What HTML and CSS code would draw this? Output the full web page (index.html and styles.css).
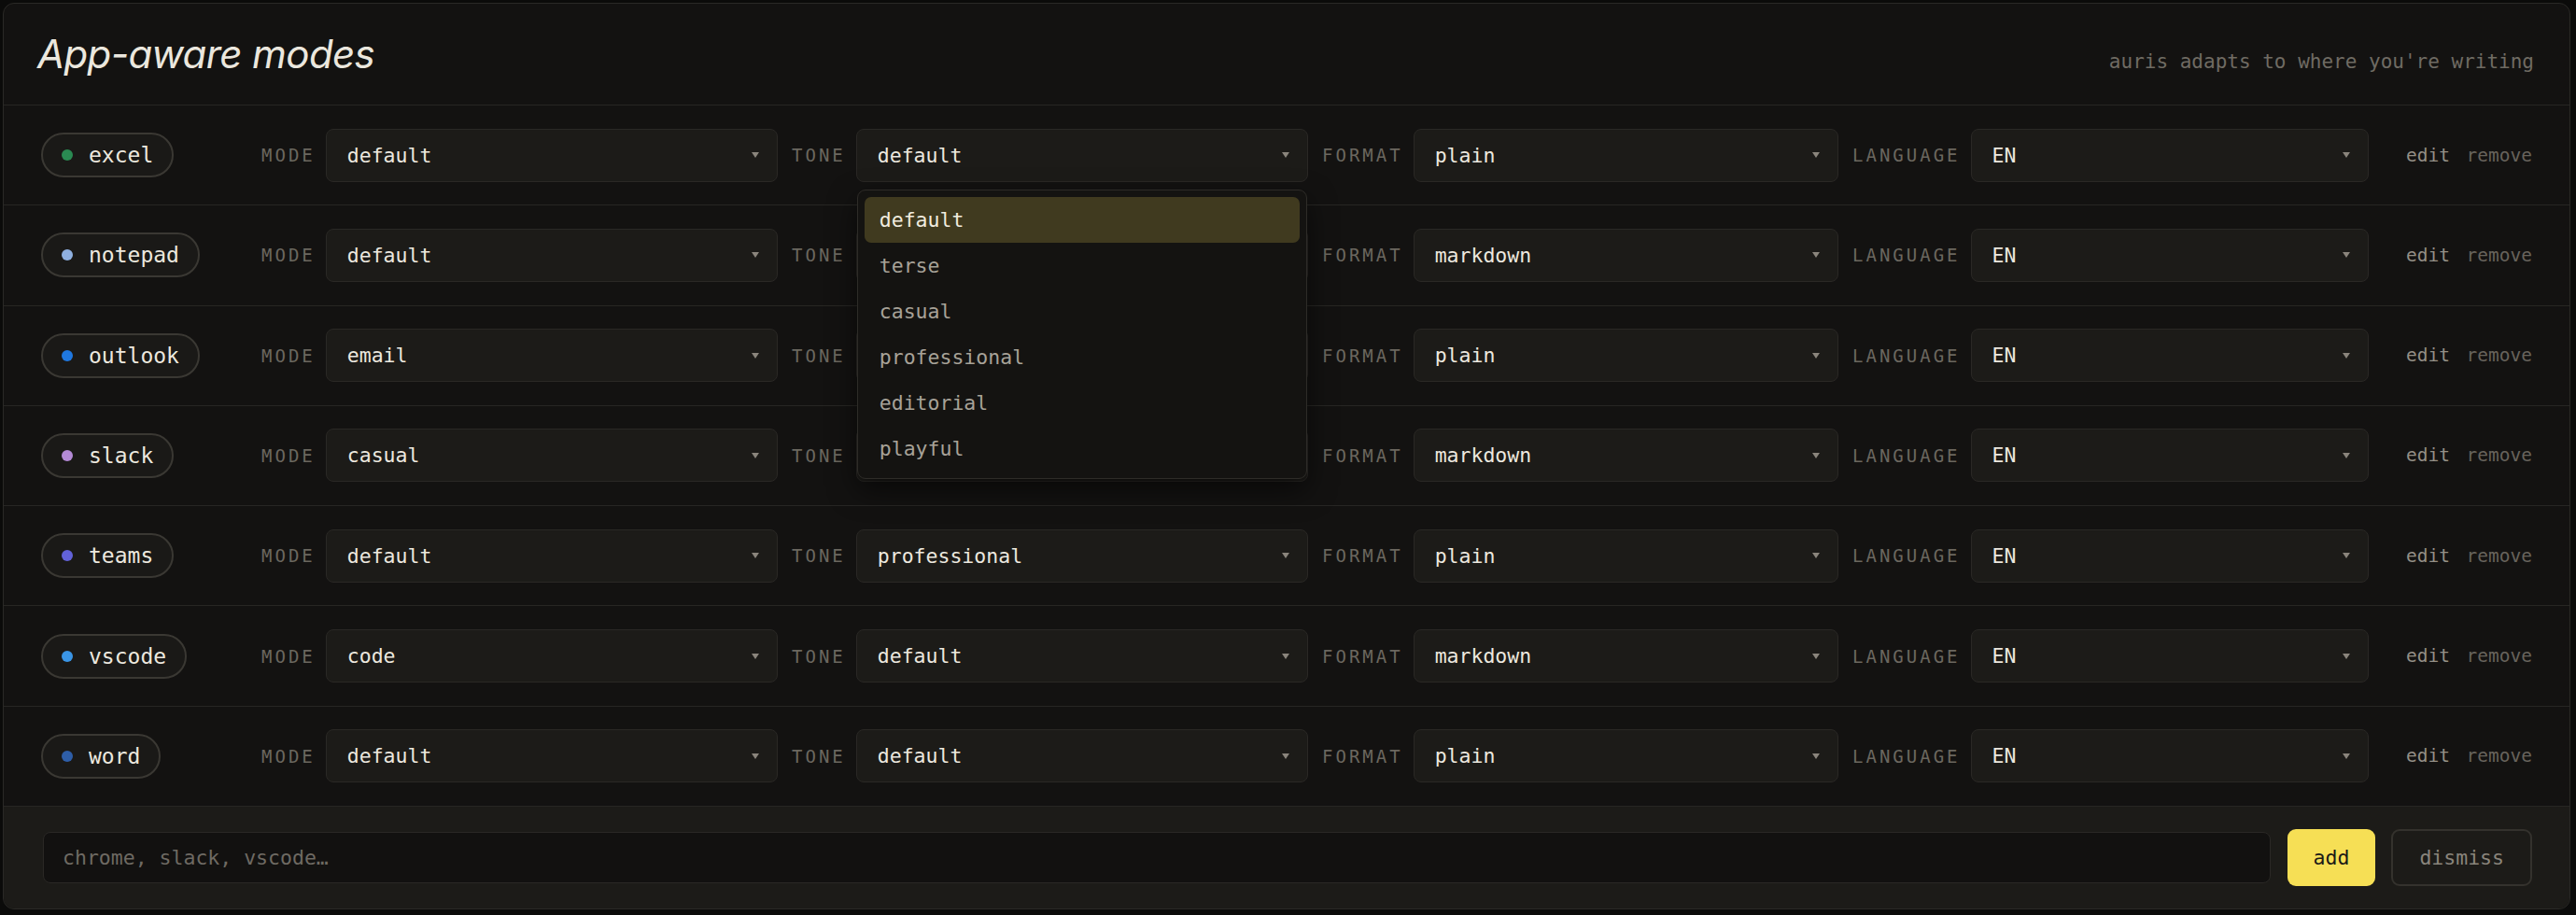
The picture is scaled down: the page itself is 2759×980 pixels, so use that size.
FILE: index.html
```
<!DOCTYPE html>
<html>
<head>
	<meta charset="utf-8">
	<meta name="viewport" content="width=device-width, initial-scale=1">
	<title>App-aware modes</title>
	<link rel="stylesheet" href="styles.css">
</head>
<body>

<div class="card">
	<header class="head">
		<h1>App-aware modes</h1>
		<span class="hint">auris adapts to where you're writing</span>
	</header>

	<div class="row">
		<div class="app"><span class="pill"><i class="dot excel"></i>excel</span></div>
		<div class="fields">
			<div class="field"><span class="label">MODE</span><div class="select">default<b></b></div></div>
			<div class="field"><span class="label">TONE</span>
				<div class="select open">default<b></b>
					<ul class="menu">
						<li class="active">default</li>
						<li>terse</li>
						<li>casual</li>
						<li>professional</li>
						<li>editorial</li>
						<li>playful</li>
					</ul>
				</div>
			</div>
			<div class="field"><span class="label">FORMAT</span><div class="select">plain<b></b></div></div>
			<div class="field"><span class="label">LANGUAGE</span><div class="select">EN<b></b></div></div>
		</div>
		<div class="actions"><button class="edit">edit</button><button class="remove">remove</button></div>
	</div>

	<div class="row">
		<div class="app"><span class="pill"><i class="dot notepad"></i>notepad</span></div>
		<div class="fields">
			<div class="field"><span class="label">MODE</span><div class="select">default<b></b></div></div>
			<div class="field"><span class="label">TONE</span><div class="select">default<b></b></div></div>
			<div class="field"><span class="label">FORMAT</span><div class="select">markdown<b></b></div></div>
			<div class="field"><span class="label">LANGUAGE</span><div class="select">EN<b></b></div></div>
		</div>
		<div class="actions"><button class="edit">edit</button><button class="remove">remove</button></div>
	</div>

	<div class="row">
		<div class="app"><span class="pill"><i class="dot outlook"></i>outlook</span></div>
		<div class="fields">
			<div class="field"><span class="label">MODE</span><div class="select">email<b></b></div></div>
			<div class="field"><span class="label">TONE</span><div class="select">professional<b></b></div></div>
			<div class="field"><span class="label">FORMAT</span><div class="select">plain<b></b></div></div>
			<div class="field"><span class="label">LANGUAGE</span><div class="select">EN<b></b></div></div>
		</div>
		<div class="actions"><button class="edit">edit</button><button class="remove">remove</button></div>
	</div>

	<div class="row">
		<div class="app"><span class="pill"><i class="dot slack"></i>slack</span></div>
		<div class="fields">
			<div class="field"><span class="label">MODE</span><div class="select">casual<b></b></div></div>
			<div class="field"><span class="label">TONE</span><div class="select">casual<b></b></div></div>
			<div class="field"><span class="label">FORMAT</span><div class="select">markdown<b></b></div></div>
			<div class="field"><span class="label">LANGUAGE</span><div class="select">EN<b></b></div></div>
		</div>
		<div class="actions"><button class="edit">edit</button><button class="remove">remove</button></div>
	</div>

	<div class="row">
		<div class="app"><span class="pill"><i class="dot teams"></i>teams</span></div>
		<div class="fields">
			<div class="field"><span class="label">MODE</span><div class="select">default<b></b></div></div>
			<div class="field"><span class="label">TONE</span><div class="select">professional<b></b></div></div>
			<div class="field"><span class="label">FORMAT</span><div class="select">plain<b></b></div></div>
			<div class="field"><span class="label">LANGUAGE</span><div class="select">EN<b></b></div></div>
		</div>
		<div class="actions"><button class="edit">edit</button><button class="remove">remove</button></div>
	</div>

	<div class="row">
		<div class="app"><span class="pill"><i class="dot vscode"></i>vscode</span></div>
		<div class="fields">
			<div class="field"><span class="label">MODE</span><div class="select">code<b></b></div></div>
			<div class="field"><span class="label">TONE</span><div class="select">default<b></b></div></div>
			<div class="field"><span class="label">FORMAT</span><div class="select">markdown<b></b></div></div>
			<div class="field"><span class="label">LANGUAGE</span><div class="select">EN<b></b></div></div>
		</div>
		<div class="actions"><button class="edit">edit</button><button class="remove">remove</button></div>
	</div>

	<div class="row">
		<div class="app"><span class="pill"><i class="dot word"></i>word</span></div>
		<div class="fields">
			<div class="field"><span class="label">MODE</span><div class="select">default<b></b></div></div>
			<div class="field"><span class="label">TONE</span><div class="select">default<b></b></div></div>
			<div class="field"><span class="label">FORMAT</span><div class="select">plain<b></b></div></div>
			<div class="field"><span class="label">LANGUAGE</span><div class="select">EN<b></b></div></div>
		</div>
		<div class="actions"><button class="edit">edit</button><button class="remove">remove</button></div>
	</div>

	<footer class="add-bar">
		<input type="text" placeholder="chrome, slack, vscode…"/>
		<button class="add">add</button>
		<button class="dismiss">dismiss</button>
	</footer>
</div>

</body>
</html>
```

FILE: styles.css
```
* {
	box-sizing: border-box;
	margin: 0;
	padding: 0;
}
body {
	background-color: #0b0b0a;
	padding: 3px 6px 6px 3px;
	font-family: 'DejaVu Sans Mono', monospace;
	color: #ebe6dc;
}
.card {
	background: #131211;
	border: 1px solid #2a2926;
	border-radius: 12px;
	overflow: visible;
}
.head {
	display: flex;
	justify-content: space-between;
	align-items: baseline;
	padding: 29px 38px 29px 36px;
	border-bottom: 1px solid #272623;
}
.head h1 {
	font-family: 'Inter', sans-serif;
	font-style: italic;
	font-weight: 400;
	font-size: 42px;
	line-height: 50px;
	letter-spacing: -0.6px;
	color: #ebe7de;
}
.hint {
	font-size: 21px;
	color: #6f6b63;
}
.row {
	display: flex;
	align-items: center;
	padding: 24.65px 40px;
	border-bottom: 1px solid #272623;
}
.app {
	width: 236px;
	flex: none;
}
.pill {
	display: inline-flex;
	align-items: center;
	height: 48px;
	padding: 0 20px;
	border: 2px solid #3a3833;
	border-radius: 24px;
	background: #1a1917;
	font-size: 23px;
	color: #ece8df;
}
.dot {
	width: 12px;
	height: 12px;
	border-radius: 50%;
	margin-right: 17px;
}
.dot.excel { background: #2a8a52; }
.dot.notepad { background: #8fb0e0; }
.dot.outlook { background: #1f78e0; }
.dot.slack { background: #b48ad6; }
.dot.teams { background: #6262d8; }
.dot.vscode { background: #3a95e6; }
.dot.word { background: #2e5ea8; }
.fields {
	flex: 1;
	display: flex;
	gap: 15px;
}
.field {
	flex: 1;
	display: flex;
	align-items: center;
	gap: 11px;
}
.label {
	font-size: 19px;
	letter-spacing: 3px;
	color: #6b675f;
}
.select {
	position: relative;
	flex: 1;
	display: flex;
	align-items: center;
	justify-content: space-between;
	height: 57px;
	padding: 0 19px 0 22px;
	background: #1c1b18;
	border: 1px solid #2a2825;
	border-radius: 8px;
	font-size: 21.5px;
	color: #ece8df;
}
.select b {
	width: 0;
	height: 0;
	border-left: 4px solid transparent;
	border-right: 4px solid transparent;
	border-top: 6px solid #8a857c;
}
.menu {
	position: absolute;
	z-index: 10;
	top: calc(100% + 9px);
	left: 0;
	right: 0;
	list-style: none;
	padding: 7px;
	background: #141311;
	border: 1px solid #2e2c28;
	border-radius: 9px;
	box-shadow: 0 12px 30px rgba(0, 0, 0, 0.55);
}
.menu li {
	height: 49px;
	line-height: 49px;
	padding: 0 16px;
	border-radius: 7px;
	color: #a7a298;
}
.menu li.active {
	background: #403a1f;
	color: #f1ecdf;
}
.actions {
	flex: none;
	width: 135px;
	margin-left: 40px;
	display: flex;
	justify-content: space-between;
}
.actions button {
	background: none;
	border: none;
	font-family: inherit;
	font-size: 19.5px;
	cursor: pointer;
}
.edit { color: #948f86; }
.remove { color: #67635c; }
.add-bar {
	display: flex;
	align-items: center;
	gap: 17px;
	padding: 24px 40px 24px 42px;
	background: #1c1b18;
	border-radius: 0 0 12px 12px;
}
.add-bar input {
	flex: 1;
	height: 55px;
	margin-right: 1px;
	padding: 0 20px;
	background: #121110;
	border: 1px solid #2a2825;
	border-radius: 8px;
	font-family: inherit;
	font-size: 21.5px;
	color: #ece8df;
	outline: none;
}
.add-bar input::placeholder {
	color: #6e6a63;
}
.add-bar button {
	height: 61px;
	border-radius: 9px;
	font-family: inherit;
	font-size: 21.5px;
	cursor: pointer;
}
.add {
	padding: 0 28px;
	background: #f6df55;
	border: none;
	color: #1b1a17;
}
.dismiss {
	padding: 0 28px;
	background: transparent;
	border: 2px solid #34322d;
	color: #8a857c;
}
```
